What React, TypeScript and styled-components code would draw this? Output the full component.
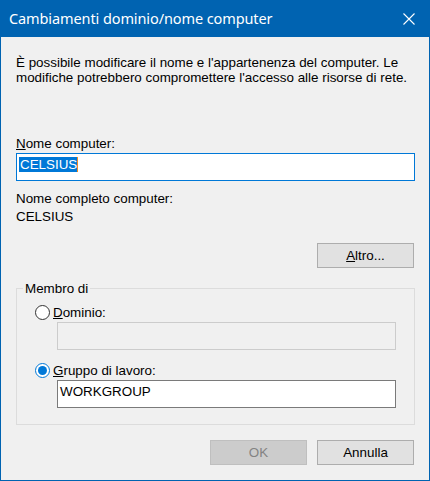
import React from 'react';
import styled, { createGlobalStyle } from 'styled-components';

const GlobalStyle = createGlobalStyle`
  html, body {
    margin: 0;
    padding: 0;
    background: #f0f0f0;
  }
  * {
    box-sizing: border-box;
  }
`;

const accent = '#0063b1';

const Window = styled.div`
  width: 430px;
  height: 481px;
  border: 1px solid ${accent};
  border-top: none;
  background: #f0f0f0;
  display: flex;
  flex-direction: column;
  font-family: 'Liberation Sans', Arial, sans-serif;
  font-size: 13.4px;
  line-height: 15px;
  color: #000;
`;

const TitleBar = styled.div`
  height: 37px;
  flex: none;
  background: ${accent};
  color: #fff;
  display: flex;
  align-items: center;
  justify-content: space-between;
  padding: 0 15px 0 9px;
  margin: 0 -1px;
`;

const Title = styled.span`
  font-family: 'Noto Sans', 'Open Sans', sans-serif;
  font-size: 14.5px;
  letter-spacing: -0.1px;
  line-height: 20px;
  padding-bottom: 2px;
`;

const CloseButton = styled.button`
  border: none;
  background: transparent;
  padding: 0;
  width: 12px;
  height: 12px;
  display: flex;
  cursor: pointer;
`;

const Body = styled.div`
  padding: 0 14px 0 14px;
  display: flex;
  flex-direction: column;
`;

const Description = styled.p`
  margin: 18px 0 0 1px;
`;

const Label = styled.label<{ $top?: number }>`
  display: block;
  margin: ${(p) => p.$top ?? 0}px 0 0 1px;
  u {
    text-decoration: underline;
  }
`;

const TextBox = styled.div<{ $focused?: boolean; $disabled?: boolean }>`
  height: 28px;
  border: 1px solid
    ${(p) => (p.$focused ? '#0078d7' : p.$disabled ? '#cccccc' : '#7a7a7a')};
  background: ${(p) => (p.$disabled ? '#f0f0f0' : '#fff')};
  padding: 3px 2px 0;
  display: flex;
  align-items: flex-start;
`;

const NameBox = styled(TextBox)`
  margin: 2px 0 0 1px;
`;

const Selected = styled.span`
  background: #0078d7;
  color: #fff;
  padding: 0 0 0 1px;
  line-height: 15px;
  border-right: 1px solid #f08a24;
`;

const Value = styled.div`
  margin: 3px 0 0 1px;
`;

const ButtonRow = styled.div<{ $top: number }>`
  display: flex;
  justify-content: flex-end;
  gap: 10px;
  margin-top: ${(p) => p.$top}px;
  padding-right: 1px;
`;

const Button = styled.button`
  width: 97px;
  height: 25px;
  border: 1px solid #adadad;
  background: #e1e1e1;
  font-family: inherit;
  font-size: 13.4px;
  color: #000;
  padding: 0;
  &:disabled {
    border-color: #bfbfbf;
    background: #cccccc;
    color: #838383;
  }
`;

const Group = styled.fieldset`
  margin: 13px 0 0 1px;
  border: 1px solid #dcdcdc;
  padding: 0;
  height: 144px;
  min-width: 0;
`;

const Legend = styled.legend`
  margin-left: 6px;
  padding: 0 2px;
`;

const GroupContent = styled.div`
  padding: 0 18px 0 18px;
  display: flex;
  flex-direction: column;
`;

const RadioRow = styled.label<{ $top: number }>`
  display: flex;
  align-items: center;
  margin-top: ${(p) => p.$top}px;
  height: 15px;
`;

const RadioCircle = styled.span<{ $checked?: boolean }>`
  width: 15px;
  height: 15px;
  flex: none;
  border-radius: 50%;
  border: 1px solid ${(p) => (p.$checked ? '#0078d7' : '#333')};
  background: #fff;
  margin-right: 3px;
  display: flex;
  align-items: center;
  justify-content: center;
  &::after {
    content: '';
    width: 9px;
    height: 9px;
    border-radius: 50%;
    background: ${(p) => (p.$checked ? '#0078d7' : 'transparent')};
  }
`;

const MemberBox = styled(TextBox)`
  margin: 2px 0 0 22px;
`;

export default function App() {
  return (
    <>
      <GlobalStyle />
      <Window>
        <TitleBar>
          <Title>Cambiamenti dominio/nome computer</Title>
          <CloseButton aria-label="Chiudi">
            <svg width="12" height="12" viewBox="0 0 12 12">
              <path d="M0.5 0.5 L11.5 11.5 M11.5 0.5 L0.5 11.5" stroke="#fff" strokeWidth="1.1" fill="none" />
            </svg>
          </CloseButton>
        </TitleBar>
        <Body>
          <Description>
            È possibile modificare il nome e l'appartenenza del computer. Le modifiche potrebbero
            compromettere l'accesso alle risorse di rete.
          </Description>
          <Label $top={51}>
            <u>N</u>ome computer:
          </Label>
          <NameBox $focused>
            <Selected>CELSIUS</Selected>
          </NameBox>
          <Label $top={10}>Nome completo computer:</Label>
          <Value>CELSIUS</Value>
          <ButtonRow $top={19}>
            <Button>
              <u>A</u>ltro...
            </Button>
          </ButtonRow>
          <Group>
            <Legend>Membro di</Legend>
            <GroupContent>
              <RadioRow $top={9}>
                <RadioCircle />
                <span>
                  <u>D</u>ominio:
                </span>
              </RadioRow>
              <MemberBox $disabled />
              <RadioRow $top={13}>
                <RadioCircle $checked />
                <span>
                  <u>G</u>ruppo di lavoro:
                </span>
              </RadioRow>
              <MemberBox>WORKGROUP</MemberBox>
            </GroupContent>
          </Group>
          <ButtonRow $top={15}>
            <Button disabled>OK</Button>
            <Button>Annulla</Button>
          </ButtonRow>
        </Body>
      </Window>
    </>
  );
}
